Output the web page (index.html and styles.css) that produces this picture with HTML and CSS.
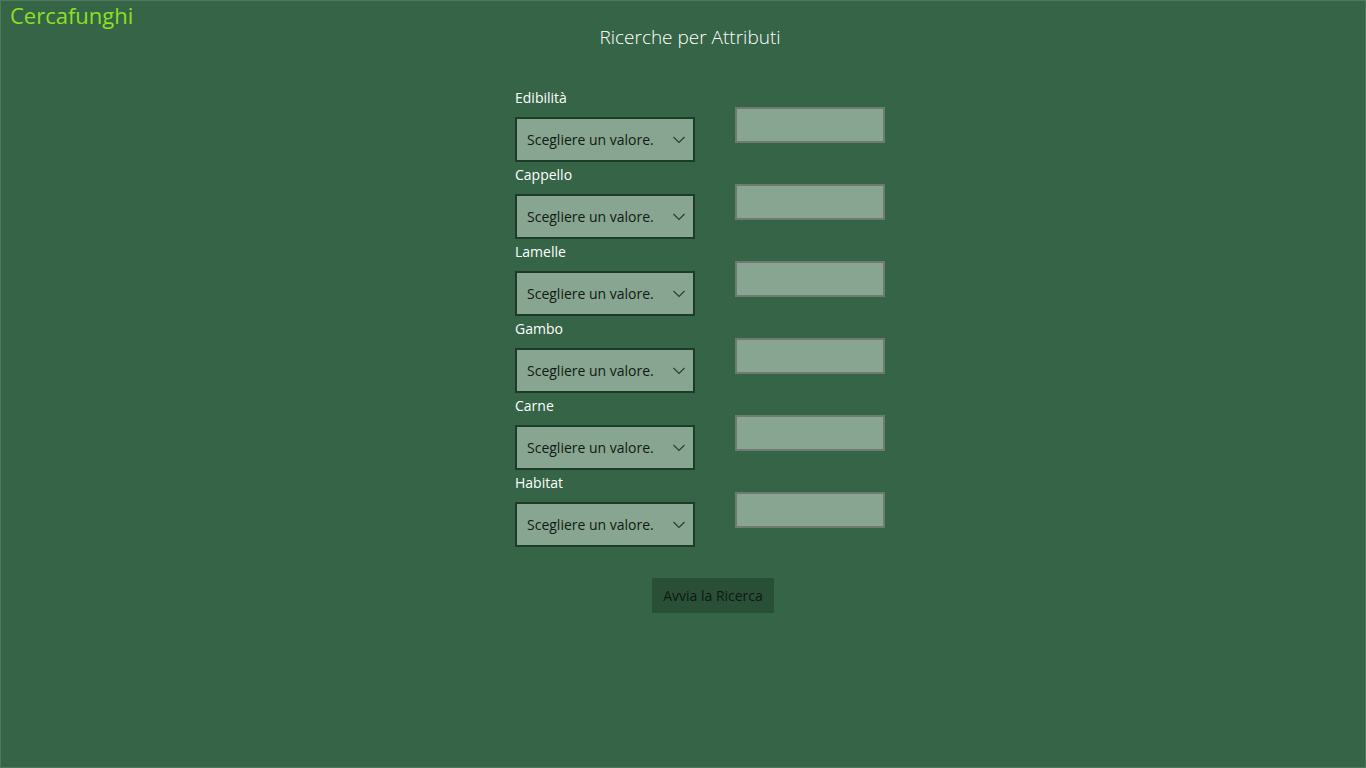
FILE: index.html
```html
<!DOCTYPE html>
<html lang="it">
<head>
<meta charset="utf-8">
<title>Cercafunghi</title>
<link rel="stylesheet" href="styles.css">
</head>
<body>
<div class="window">
  <header class="app-title">Cercafunghi</header>
  <h1 class="page-title">Ricerche per Attributi</h1>
  <main class="form">
    <div class="row">
      <div class="field">
        <label class="label">Edibilità</label>
        <div class="combo"><span>Scegliere un valore.</span><svg class="chev" viewBox="0 0 12 8" width="12" height="8"><path d="M0.5 1 L6 6.5 L11.5 1" fill="none" stroke="#2a3a30" stroke-width="1.1"/></svg></div>
      </div>
      <div class="textbox"></div>
    </div>
    <div class="row">
      <div class="field">
        <label class="label">Cappello</label>
        <div class="combo"><span>Scegliere un valore.</span><svg class="chev" viewBox="0 0 12 8" width="12" height="8"><path d="M0.5 1 L6 6.5 L11.5 1" fill="none" stroke="#2a3a30" stroke-width="1.1"/></svg></div>
      </div>
      <div class="textbox"></div>
    </div>
    <div class="row">
      <div class="field">
        <label class="label">Lamelle</label>
        <div class="combo"><span>Scegliere un valore.</span><svg class="chev" viewBox="0 0 12 8" width="12" height="8"><path d="M0.5 1 L6 6.5 L11.5 1" fill="none" stroke="#2a3a30" stroke-width="1.1"/></svg></div>
      </div>
      <div class="textbox"></div>
    </div>
    <div class="row">
      <div class="field">
        <label class="label">Gambo</label>
        <div class="combo"><span>Scegliere un valore.</span><svg class="chev" viewBox="0 0 12 8" width="12" height="8"><path d="M0.5 1 L6 6.5 L11.5 1" fill="none" stroke="#2a3a30" stroke-width="1.1"/></svg></div>
      </div>
      <div class="textbox"></div>
    </div>
    <div class="row">
      <div class="field">
        <label class="label">Carne</label>
        <div class="combo"><span>Scegliere un valore.</span><svg class="chev" viewBox="0 0 12 8" width="12" height="8"><path d="M0.5 1 L6 6.5 L11.5 1" fill="none" stroke="#2a3a30" stroke-width="1.1"/></svg></div>
      </div>
      <div class="textbox"></div>
    </div>
    <div class="row">
      <div class="field">
        <label class="label">Habitat</label>
        <div class="combo"><span>Scegliere un valore.</span><svg class="chev" viewBox="0 0 12 8" width="12" height="8"><path d="M0.5 1 L6 6.5 L11.5 1" fill="none" stroke="#2a3a30" stroke-width="1.1"/></svg></div>
      </div>
      <div class="textbox"></div>
    </div>
    <div class="actions">
      <button class="search-btn">Avvia la Ricerca</button>
    </div>
  </main>
</div>
</body>
</html>
```

FILE: styles.css
```css
html, body {
  margin: 0;
  padding: 0;
  background: #356447;
}
body {
  font-family: "Open Sans", "Noto Sans", sans-serif;
}
.window {
  box-sizing: border-box;
  width: 1366px;
  height: 768px;
  border: 1px solid #4b7a5d;
  overflow: hidden;
}
.app-title {
  color: #8fe01e;
  font-size: 22px;
  line-height: 28px;
  padding-left: 9px;
  height: 28px;
}
.page-title {
  margin: -5px 0 0 0;
  color: #ffffff;
  font-weight: 300;
  font-size: 19px;
  line-height: 26px;
  text-align: center;
  padding-left: 14px;
  height: 28px;
}
.form {
  padding-top: 34px;
  padding-left: 514px;
}
.row {
  display: flex;
  gap: 40px;
  height: 77px;
}
.field {
  width: 180px;
  display: flex;
  flex-direction: column;
}
.label {
  display: block;
  color: #ffffff;
  font-size: 14px;
  line-height: 20px;
  padding-top: 2px;
  height: 29px;
}
.combo {
  box-sizing: border-box;
  width: 180px;
  height: 45px;
  border: 2px solid #1d3b29;
  background: #87a591;
  display: flex;
  align-items: center;
  justify-content: space-between;
  padding: 0 8px 0 10px;
  color: #111a14;
  font-size: 14px;
}
.chev {
  display: block;
}
.textbox {
  box-sizing: border-box;
  margin-top: 21px;
  width: 150px;
  height: 36px;
  border: 2px solid #6f7a73;
  background: #87a591;
}
.actions {
  padding-top: 30px;
  padding-left: 137px;
}
.search-btn {
  box-sizing: border-box;
  width: 122px;
  height: 35px;
  border: none;
  background: #2a4f37;
  color: #0e1711;
  font-family: inherit;
  font-size: 14px;
  padding: 0;
}
```
